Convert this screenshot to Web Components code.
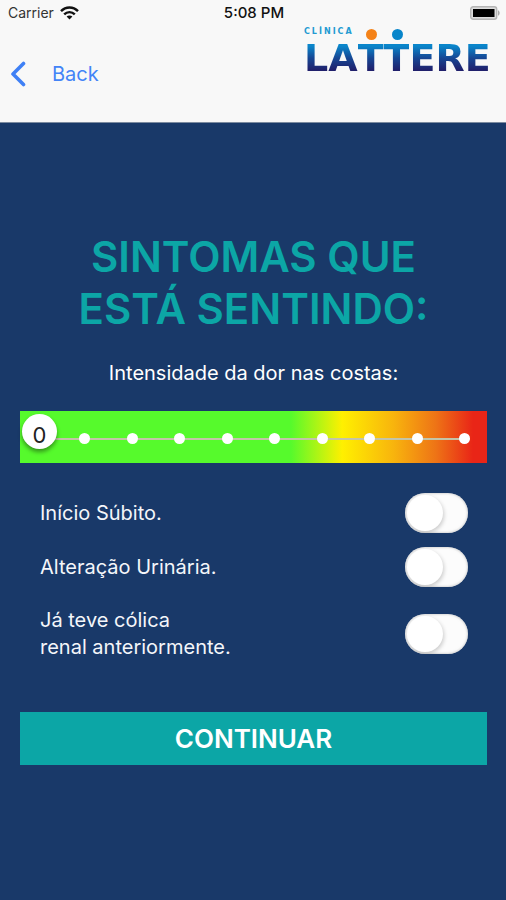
<!DOCTYPE html>
<html lang="pt-BR">
<head>
<meta charset="utf-8">
<meta name="viewport" content="width=device-width, initial-scale=1">
<title>Clínica Lattere</title>
<style>
body { margin: 0; font-family: Inter, "Liberation Sans", sans-serif; background: #193969; }
</style>
</head>
<body>
<symptoms-page></symptoms-page>
<script>
const define = (name, html, setup) => {
  const template = document.createElement('template');
  template.innerHTML = html;
  customElements.define(name, class extends HTMLElement {
    constructor() {
      super();
      this.attachShadow({ mode: 'open' }).append(template.content.cloneNode(true));
      if (setup) setup(this.shadowRoot, this);
    }
  });
};

define('status-bar', `
<style>
:host { display: grid; grid-template-columns: 1fr auto 1fr; align-items: center; height: 26px; padding: 0 6px 0 8px; font-size: 14px; line-height: 16px; color: #333; }
.left { display: flex; align-items: center; gap: 6px; }
.time { font-size: 15px; font-weight: 500; color: #111; }
.battery { justify-self: end; }
svg { display: block; }
</style>
<div class="left"><span>Carrier</span>
<svg width="19" height="14" viewBox="0 0 19 14" fill="none" stroke="#111" stroke-width="2.4" aria-label="Wi-Fi"><path d="M1 5.2C5.8.2 13.2.2 18 5.2M4.2 8.4c3-3.1 7.6-3.1 10.6 0"/><path d="M9.5 13.5 6.6 10.6c1.6-1.6 4.2-1.6 5.8 0z" fill="#111" stroke="none"/></svg></div>
<span class="time">5:08 PM</span>
<svg class="battery" width="30" height="14" viewBox="0 0 30 14" aria-label="Bateria"><rect x=".7" y=".7" width="26" height="12.6" rx="2.5" fill="#ddd" stroke="#b5b5b5" stroke-width="1.4"/><rect x="3" y="3" width="21.5" height="8" fill="#000"/><path d="M28 4.2c2.2 1 2.2 4.6 0 5.6z" fill="#aaa"/></svg>
`);

define('brand-logo', `
<style>
:host { display: flex; flex-direction: column; gap: 5px; font-family: "DejaVu Sans", sans-serif; font-weight: 700; white-space: nowrap; }
small { font-size: 8px; line-height: 8px; letter-spacing: 2px; color: #239bd2; }
.word { display: flex; font-size: 38px; line-height: 34px; }
.word > * { background: linear-gradient(#0a86cb 5px, #164794 17px, #20206c 29px); -webkit-background-clip: text; background-clip: text; color: transparent; }
.person { position: relative; }
.person i { position: absolute; left: 50%; top: -12px; margin-left: -5px; width: 11px; height: 11px; border-radius: 50%; background: var(--head); }
</style>
<small>CLÍNICA</small>
<div class="word"><div>LA</div><div class="person" style="--head:#f48218">T<i></i></div><div class="person" style="--head:#0885ca">T<i></i></div><div>ERE</div></div>
`);

define('nav-bar', `
<style>
:host { display: flex; justify-content: space-between; align-items: flex-start; padding: 2px 0 35px 10px; overflow: hidden; }
button { display: flex; align-items: center; gap: 26px; margin-top: 33px; padding: 0; border: 0; background: none; font: inherit; font-size: 20px; line-height: 26px; color: #4384f7; cursor: pointer; }
brand-logo { width: 202px; }
</style>
<button type="button"><svg width="16" height="26" viewBox="0 0 16 26" fill="none" stroke="#3f80f5" stroke-width="3.6" stroke-linecap="round" stroke-linejoin="round" aria-hidden="true"><path d="M13.5 2.5 3 13l10.5 10.5"/></svg><slot></slot></button>
<brand-logo></brand-logo>
`);

define('pain-scale', `
<style>
:host { display: block; --step: 0; }
.bar { position: relative; display: grid; align-items: center; height: 52px; background: linear-gradient(90deg, #56fa2c 58%, #fff000 69%, #f8b40d 80%, #ee7416 89%, #e92517 97%); }
.ticks, input { grid-area: 1 / 1; }
.ticks { display: flex; justify-content: space-between; align-items: center; margin: 3px 17px 0 12px; background: linear-gradient(#c4c4a8, #c4c4a8) center / 100% 2px no-repeat; }
.ticks i { width: 11px; height: 11px; border-radius: 50%; background: #fff; }
input { appearance: none; -webkit-appearance: none; width: calc(100% - 4px); height: 35px; margin: 0 2px 12px; background: none; cursor: pointer; }
input::-webkit-slider-thumb { -webkit-appearance: none; width: 35px; height: 35px; border-radius: 50%; background: #fff; box-shadow: 0 3px 4px #0006; }
output { position: absolute; left: calc(2px + (100% - 39px) * var(--step) / 9); top: 7px; width: 35px; text-align: center; font-size: 22px; line-height: 35px; color: #222; pointer-events: none; }
</style>
<div class="bar"><div class="ticks">${'<i></i>'.repeat(10)}</div>
<input id="pain" type="range" min="0" max="9" value="0" aria-label="Intensidade da dor nas costas"><output for="pain">0</output></div>
`, (root, host) => {
  const input = root.querySelector('input');
  input.addEventListener('input', () => {
    root.querySelector('output').value = input.value;
    host.style.setProperty('--step', input.value);
  });
});

define('symptom-toggle', `
<style>
:host { display: block; }
label { display: flex; align-items: center; justify-content: space-between; box-sizing: border-box; min-height: 54px; padding: 13px 19px 13px 20px; font-size: 20px; line-height: 27px; color: #f4f6fa; cursor: pointer; }
input { appearance: none; -webkit-appearance: none; flex: none; display: flex; width: 63px; height: 40px; margin: -7px 0; border-radius: 20px; background: #fcfcfc; box-shadow: inset 0 0 2px 1px #bbb8; overflow: hidden; cursor: pointer; }
input::before { content: ""; width: 36px; height: 36px; margin: 2px; border-radius: 50%; background: #fff; box-shadow: 1px 2px 4px #0003; }
input:checked { justify-content: flex-end; background: #0ca6a6; }
</style>
<label><span><slot></slot></span><input type="checkbox" role="switch"></label>
`);

define('primary-button', `
<style>
:host { display: block; }
button { display: block; width: 100%; padding: 10px; border: 0; background: #0ca6a6; color: #fff; font: inherit; font-size: 26px; font-weight: 600; line-height: 33px; cursor: pointer; }
</style>
<button type="button"><slot></slot></button>
`);

define('symptoms-page', `
<style>
:host { display: flex; flex-direction: column; min-height: 100vh; }
header { background: #f8f8f8; border-bottom: 1px solid #7c8ba0; }
main { flex: 1; padding: 108px 19px 40px 20px; background: #193969; }
h1 { margin: 0 0 24px; font-size: 42px; line-height: 52px; font-weight: 600; text-align: center; color: #0ca6a6; }
p { margin: 0 0 24px; font-size: 20px; line-height: 28px; text-align: center; color: #fff; }
.options { margin: 23px 0 38px; }
</style>
<header><status-bar></status-bar><nav-bar>Back</nav-bar></header>
<main>
<h1>SINTOMAS QUE<br>ESTÁ SENTINDO:</h1>
<p>Intensidade da dor nas costas:</p>
<pain-scale></pain-scale>
<div class="options">
<symptom-toggle>Início Súbito.</symptom-toggle>
<symptom-toggle>Alteração Urinária.</symptom-toggle>
<symptom-toggle>Já teve cólica<br>renal anteriormente.</symptom-toggle>
</div>
<primary-button>CONTINUAR</primary-button>
</main>
`);
</script>
</body>
</html>
